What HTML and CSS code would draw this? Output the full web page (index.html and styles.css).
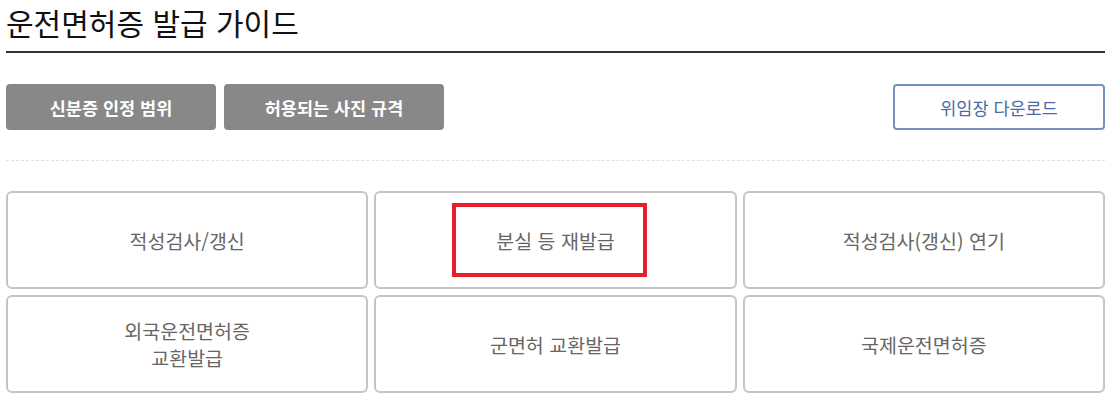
FILE: index.html
```html
<!DOCTYPE html>
<html lang="ko">
  <head>
    <meta charset="UTF-8" />
    <meta name="viewport" content="width=device-width, initial-scale=1.0" />
    <title>운전면허증 발급 가이드</title>
    <link rel="stylesheet" href="styles.css">
  </head>
  <body>
    <div class="guide">
      <h2 class="guide-title">운전면허증 발급 가이드</h2>

      <!-- 상단 버튼 -->
      <div class="top-buttons">
        <div class="left-buttons">
          <button class="btn-gray btn-id">신분증 인정 범위</button>
          <button class="btn-gray btn-photo">허용되는 사진 규격</button>
        </div>
        <button class="btn-outline">위임장 다운로드</button>
      </div>

      <div class="divider"></div>

      <!-- 메뉴 -->
      <div class="menu-grid">
        <a class="menu-item" href="#">적성검사/갱신</a>
        <a class="menu-item active" href="#">
          분실 등 재발급
          <span class="highlight"></span>
        </a>
        <a class="menu-item" href="#">적성검사(갱신) 연기</a>
        <a class="menu-item" href="#">외국운전면허증<br />교환발급</a>
        <a class="menu-item" href="#">군면허 교환발급</a>
        <a class="menu-item" href="#">국제운전면허증</a>
      </div>
    </div>
  </body>
</html>
```

FILE: styles.css
```css
* {
  margin: 0;
  padding: 0;
  box-sizing: border-box;
}

body {
  font-family: "Noto Sans CJK KR", "Noto Sans", sans-serif;
  background: #fff;
  color: #222;
}

.guide {
  width: 1099px;
  margin-left: 6px;
}

.guide-title {
  font-size: 30px;
  font-weight: normal;
  line-height: 44px;
  height: 53px;
  padding-bottom: 7px;
  border-bottom: 2px solid #333;
  color: #111;
}

.top-buttons {
  display: flex;
  justify-content: space-between;
  margin-top: 31px;
}

.left-buttons {
  display: flex;
  gap: 8px;
}

.btn-gray,
.btn-outline {
  height: 46px;
  border-radius: 4px;
  font-family: inherit;
  font-size: 17.5px;
  cursor: pointer;
}

.btn-gray {
  background-color: #888;
  border: none;
  color: #fff;
  font-weight: bold;
}

.btn-id {
  width: 210px;
}

.btn-photo {
  width: 220px;
}

.btn-outline {
  width: 212px;
  background-color: #fff;
  border: 2px solid #7591bd;
  color: #4b6ca5;
}

.divider {
  margin-top: 30px;
  border-top: 1px dashed #e2e2e2;
}

.menu-grid {
  display: grid;
  grid-template-columns: repeat(3, 1fr);
  grid-auto-rows: 98px;
  gap: 6px;
  margin-top: 30px;
}

.menu-item {
  position: relative;
  display: flex;
  align-items: center;
  justify-content: center;
  text-align: center;
  border: 2px solid #c4c4c4;
  border-radius: 6px;
  color: #666;
  font-size: 19.5px;
  line-height: 27px;
  text-decoration: none;
}

/* 강조 박스 */
.highlight {
  position: absolute;
  left: 76px;
  top: 10px;
  width: 195px;
  height: 74px;
  border: 4px solid #e5202a;
}
```
